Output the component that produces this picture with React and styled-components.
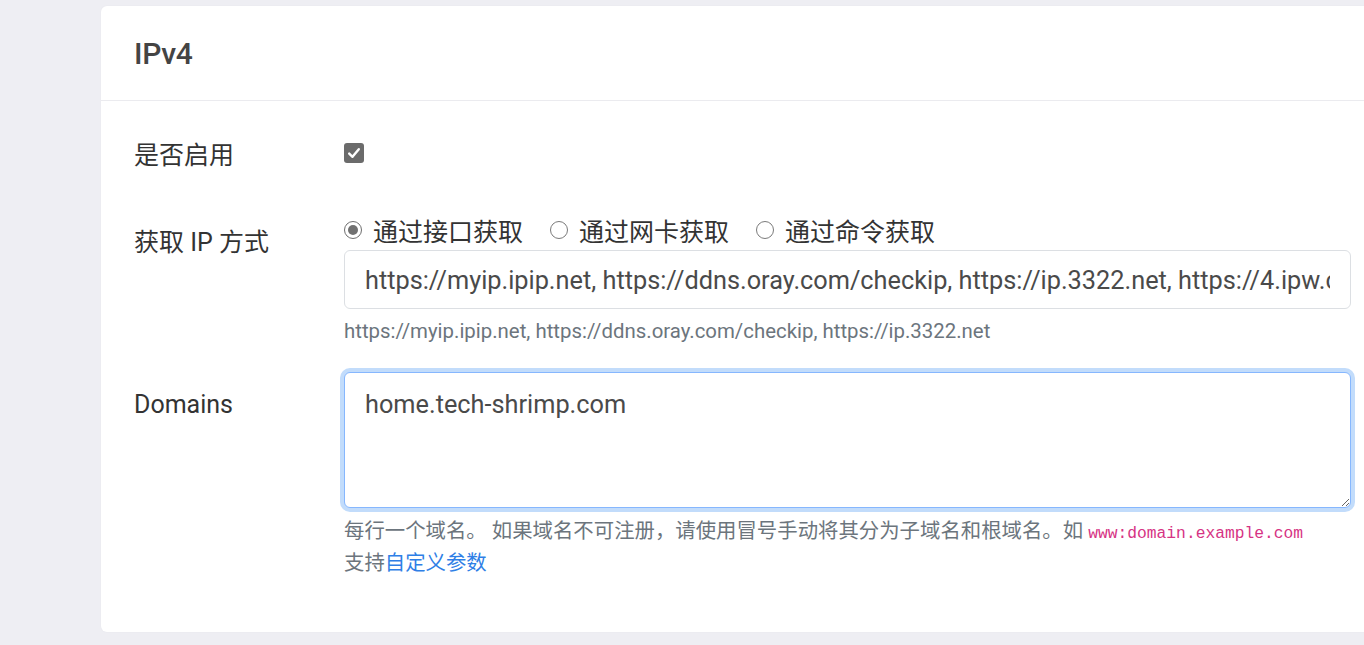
import React from "react";
import styled, { createGlobalStyle } from "styled-components";

const FONT = `Roboto, "Noto Sans CJK SC", sans-serif`;

const Global = createGlobalStyle`
  html, body { margin: 0; padding: 0; background: #eeeef3; }
  body { overflow: hidden; font-family: ${FONT}; color: #333; }
  * { box-sizing: border-box; }
`;

const Page = styled.div`
  width: 1364px;
  height: 645px;
  padding: 6px 0 0 101px;
  overflow: hidden;
`;

const Card = styled.section`
  width: 1283px;
  background: #fff;
  border-radius: 6px;
  box-shadow: 0 0 2px rgba(0, 0, 0, 0.04);
`;

const CardHeader = styled.header`
  height: 95px;
  display: flex;
  align-items: center;
  padding: 2px 33px 0;
  border-bottom: 1px solid #ebebef;
`;

const Title = styled.h5`
  margin: 0;
  font-size: 30px;
  font-weight: 500;
  color: #444;
  line-height: 1.2;
  letter-spacing: -0.3px;
`;

const CardBody = styled.div`
  padding: 35px 33px 54px;
`;

const FormRow = styled.div`
  display: grid;
  grid-template-columns: 210px 1fr;
  align-items: start;
  margin-bottom: ${(p) => p.$mb ?? 0}px;
`;

const Label = styled.label`
  font-size: 25px;
  line-height: 38px;
  padding-top: ${(p) => p.$pt ?? 0}px;
  color: #333;
`;

const Control = styled.div`
  display: flex;
  flex-direction: column;
  min-width: 0;
`;

const CheckBox = styled.span`
  width: 20px;
  height: 20px;
  margin-top: 7px;
  margin-bottom: 11px;
  border-radius: 3px;
  background: #6b6b6b;
  display: flex;
  align-items: center;
  justify-content: center;
`;

const RadioGroup = styled.div`
  display: flex;
  align-items: center;
  height: 38px;
  margin-top: -1px;
`;

const RadioItem = styled.label`
  display: flex;
  align-items: center;
  gap: 11px;
  margin-right: 27px;
  font-size: 25px;
  color: #333;
`;

const RadioDot = styled.span`
  width: 18px;
  height: 18px;
  border-radius: 50%;
  border: 1.5px solid ${(p) => (p.$checked ? "#6e6e6e" : "#7a7a7a")};
  display: flex;
  align-items: center;
  justify-content: center;
  &::after {
    content: "";
    width: 10px;
    height: 10px;
    border-radius: 50%;
    background: ${(p) => (p.$checked ? "#707070" : "transparent")};
  }
`;

const TextInput = styled.input`
  width: 100%;
  height: 59px;
  margin-top: 1px;
  border: 1px solid #dcdfe3;
  border-radius: 6px;
  padding: 2px 20px 0;
  font-family: ${FONT};
  font-size: 25.3px;
  color: #4a4a4a;
  background: #fff;
  outline: none;
`;

const TextArea = styled.textarea`
  width: 100%;
  height: 136px;
  border: 1px solid #86b7fe;
  border-radius: 6px;
  box-shadow: 0 0 0 4px #c2dcfb;
  padding: 13px 20px 12px;
  font-family: ${FONT};
  font-size: 25.3px;
  line-height: 38px;
  color: #4a4a4a;
  outline: none;
  resize: vertical;
  display: block;
`;

const Help = styled.div`
  margin-top: ${(p) => p.$mt ?? 7}px;
  font-size: 20.4px;
  line-height: 30px;
  color: #6c757d;
  white-space: nowrap;
`;

const Code = styled.code`
  font-family: "Liberation Mono", monospace;
  font-size: 16.3px;
  color: #d63384;
`;

const Link = styled.a`
  color: #2f7fe6;
  text-decoration: none;
`;

const CheckMark = () => (
  <svg width="16" height="16" viewBox="0 0 16 16">
    <path d="M3.2 8.6 L6.5 11.8 L12.8 4.2" fill="none" stroke="#fff" strokeWidth="2.4" strokeLinecap="round" strokeLinejoin="round" />
  </svg>
);

const radios = ["通过接口获取", "通过网卡获取", "通过命令获取"];

export default function App() {
  return (
    <>
      <Global />
      <Page>
        <Card>
          <CardHeader>
            <Title>IPv4</Title>
          </CardHeader>
          <CardBody>
            <FormRow $mb={37}>
              <Label $pt={1}>是否启用</Label>
              <Control>
                <CheckBox>
                  <CheckMark />
                </CheckBox>
              </Control>
            </FormRow>
            <FormRow $mb={26}>
              <Label $pt={12}>获取 IP 方式</Label>
              <Control>
                <RadioGroup>
                  {radios.map((r, i) => (
                    <RadioItem key={r}>
                      <RadioDot $checked={i === 0} />
                      {r}
                    </RadioItem>
                  ))}
                </RadioGroup>
                <TextInput
                  readOnly
                  value="https://myip.ipip.net, https://ddns.oray.com/checkip, https://ip.3322.net, https://4.ipw.cn"
                />
                <Help>https://myip.ipip.net, https://ddns.oray.com/checkip, https://ip.3322.net</Help>
              </Control>
            </FormRow>
            <FormRow>
              <Label $pt={14}>Domains</Label>
              <Control>
                <TextArea defaultValue="home.tech-shrimp.com" />
                <Help $mt={8}>
                  每行一个域名。 如果域名不可注册，请使用冒号手动将其分为子域名和根域名。如 <Code>www:domain.example.com</Code>
                </Help>
                <Help $mt={-1}>
                  支持<Link href="#">自定义参数</Link>
                </Help>
              </Control>
            </FormRow>
          </CardBody>
        </Card>
      </Page>
    </>
  );
}
